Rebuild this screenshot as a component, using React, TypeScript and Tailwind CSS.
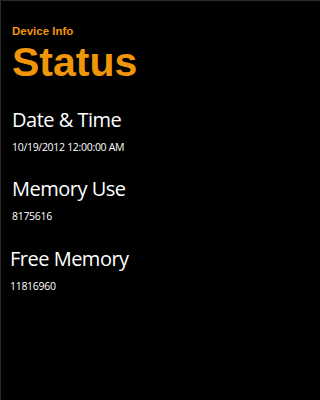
import React from "react";

function Heading({ children, className = "" }: { children: React.ReactNode; className?: string }) {
  return (
    <div className={"text-[20px] leading-none tracking-[-0.5px] text-white font-['Open_Sans',sans-serif] " + className}>
      {children}
    </div>
  );
}

function Value({ children, className = "" }: { children: React.ReactNode; className?: string }) {
  return (
    <div className={"mt-[12px] text-[10.5px] leading-none tracking-[-0.3px] text-white font-['Open_Sans',sans-serif] " + className}>
      {children}
    </div>
  );
}

export default function App() {
  return (
    <div className="w-full min-h-screen bg-black border-t border-l border-[#2a2a2a] overflow-hidden">
      <div className="flex flex-col pl-[11px]">
        <div className="mt-[25px] text-[11.5px] leading-none font-bold text-[#f09609] font-['Liberation_Sans',Arial,sans-serif]">
          Device Info
        </div>
        <div className="mt-[4px] text-[41px] leading-none font-bold text-[#f09609] font-['Liberation_Sans',Arial,sans-serif]">
          Status
        </div>
        <Heading className="mt-[27px]">Date &amp; Time</Heading>
        <Value>10/19/2012 12:00:00 AM</Value>
        <Heading className="mt-[27px]">Memory Use</Heading>
        <Value>8175616</Value>
        <div className="-ml-[2px] flex flex-col">
          <Heading className="mt-[27px]">Free Memory</Heading>
          <Value className="mt-[11px]">11816960</Value>
        </div>
      </div>
    </div>
  );
}
